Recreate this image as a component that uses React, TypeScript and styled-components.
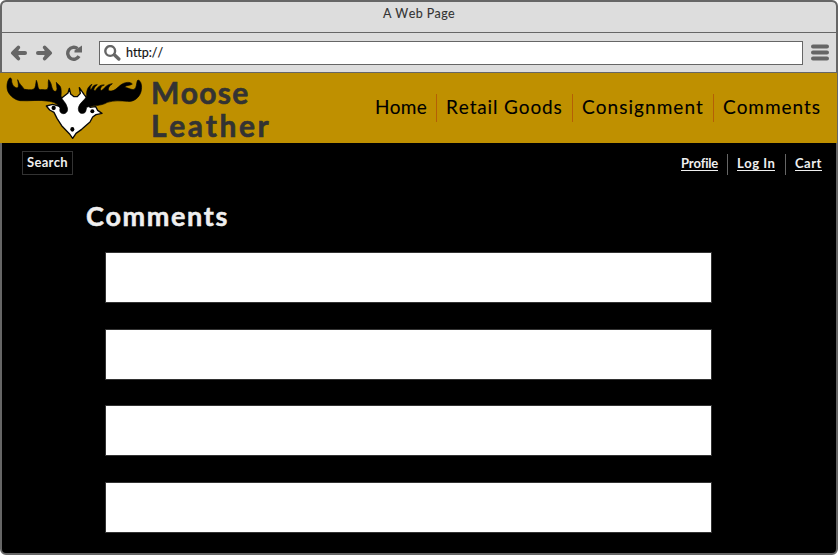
import React from "react";
import styled, { createGlobalStyle } from "styled-components";

const GlobalStyle = createGlobalStyle`
  * { box-sizing: border-box; }
  body { margin: 0; background: #fff; overflow: hidden; }
`;

const BrowserWindow = styled.div`
  width: 838px;
  height: 555px;
  display: flex;
  flex-direction: column;
  border: 2px solid #666;
  border-radius: 6px;
  background: #000;
  font-family: Lato, "Open Sans", sans-serif;
`;

const TitleBar = styled.div`
  height: 31px;
  flex: none;
  display: flex;
  justify-content: center;
  border-bottom: 1px solid #666;
  border-radius: 4px 4px 0 0;
  background: #ddd;
`;

const Toolbar = styled.div`
  height: 40px;
  flex: none;
  display: flex;
  align-items: center;
  padding: 0 7px 0 8px;
  border-bottom: 1px solid #666;
  background: #ddd;
  color: #666;
`;

const ToolIcon = styled.svg<{ $gap?: number }>`
  flex: none;
  display: block;
  margin-right: ${(p) => p.$gap ?? 0}px;
`;

const AddressBar = styled.div`
  width: 704px;
  height: 24px;
  margin-right: 8px;
  padding-left: 4px;
  display: flex;
  align-items: center;
  border: 1px solid #666;
  background: #fff;
`;

const Text = styled.span<{
  $size: number;
  $line: number;
  $spacing?: number;
  $color?: string;
  $weight?: number;
  $stroke?: number;
}>`
  display: block;
  white-space: nowrap;
  font-size: ${(p) => p.$size}px;
  line-height: ${(p) => p.$line}px;
  letter-spacing: ${(p) => p.$spacing ?? 0}px;
  color: ${(p) => p.$color ?? "#111"};
  font-weight: ${(p) => p.$weight ?? 400};
  -webkit-text-stroke: ${(p) => p.$stroke ?? 0}px currentColor;
  font-kerning: none;
`;

const Header = styled.header`
  height: 70px;
  flex: none;
  display: flex;
  margin: 0 -1px 0 -2px;
  background: #bf9000;
`;

const Logo = styled.svg`
  width: 150px;
  height: 70px;
  flex: none;
`;

const Brand = styled.div`
  width: 216px;
  padding: 3px 0 0 1px;
`;

const Nav = styled.nav`
  display: flex;
  height: 28px;
  margin-top: 21px;
`;

const NavItem = styled.a<{ $width: number }>`
  width: ${(p) => p.$width}px;
  padding-left: 9px;
  & + & { border-left: 1px solid #b45f06; }
`;

const Page = styled.main`
  flex: 1;
  min-height: 0;
`;

const UtilityRow = styled.div`
  height: 49px;
  padding: 8px 0 0 20px;
  display: flex;
  justify-content: space-between;
`;

const SearchButton = styled.button`
  width: 51px;
  height: 24px;
  padding: 0 0 1px 4px;
  border: 1px solid #333;
  background: #000;
  font-family: inherit;
  text-align: left;
`;

const AccountLinks = styled.div`
  display: flex;
  height: 21px;
  margin-top: 3px;
`;

const AccountLink = styled.a<{ $width: number }>`
  width: ${(p) => p.$width}px;
  padding-left: 9px;
  & + & { border-left: 1px solid #666; }
`;

const Underlined = styled.div`
  width: fit-content;
  height: 17px;
  border-bottom: 1px solid #efefef;
`;

const Heading = styled.h1`
  margin: 0;
  height: 60px;
  padding: 7px 0 0 84px;
`;

const CommentList = styled.div`
  padding-left: 103px;
`;

const CommentBox = styled.div<{ $gap: number }>`
  width: 607px;
  height: 51px;
  margin-bottom: ${(p) => p.$gap}px;
  border: 1px solid #333;
  background: #fff;
`;

const NAV = [
  { label: "Home", width: 70, spacing: 0.25 },
  { label: "Retail Goods", width: 136, spacing: 0.85 },
  { label: "Consignment", width: 141, spacing: 1.05 },
  { label: "Comments", width: 123, spacing: 0.95 },
];

const ACCOUNT = [
  { label: "Profile", width: 55, spacing: -0.2 },
  { label: "Log In", width: 58, spacing: 0.5 },
  { label: "Cart", width: 51, spacing: 0.5 },
];

const Arrow = ({ flip, gap }: { flip?: boolean; gap: number }) => (
  <ToolIcon $gap={gap} width="18" height="16" viewBox="0 0 18 16">
    <g transform={flip ? "translate(18 0) scale(-1 1)" : undefined} fill="none" stroke="#666" strokeLinecap="round">
      <path d="M4 8H15" strokeWidth="4" />
      <path d="M8.3 2.4L2.8 8L8.3 13.6" strokeWidth="3.6" strokeLinejoin="round" />
      <path d="M3 8L8.5 2.5V13.5Z" fill="#666" stroke="none" />
    </g>
  </ToolIcon>
);

const MooseLogo = () => (
  <Logo viewBox="0 9 450 210">
    <path
      d="M180 88L190 80L204 69L208 55L212 72L222 80L232 80L241 70L238 53L252 73L259 82L270 112L287 110L293 121L306 130L288 134L278 141L270 156L245 178L228 190L218 205L208 191L185 167L171 145L162 127L149 120L139 108L158 103L176 108Z"
      fill="#fff"
      stroke="#080808"
      strokeWidth="4"
      strokeLinejoin="round"
    />
    <path
      d="M29 24C20 34 19 53 24 65C31 79 46 90 60 92C88 94 116 88 148 94C167 97 176 106 180 115C177 126 184 132 192 131C202 129 205 120 201 110C198 97 186 91 183 78C184 65 184 57 181 50C177 43 171 42 169 37L171 56C170 65 164 66 160 61C153 51 157 43 146 29C143 38 147 48 143 57C137 62 128 58 121 59C112 58 115 44 109 31C107 42 107 53 102 57C92 62 79 58 73 58C66 47 58 43 53 29C54 39 58 50 52 54C42 53 34 42 35 29C34 25 32 23 29 24Z"
      fill="#000"
      stroke="#000"
      strokeWidth="2"
    />
    <path
      d="M414 30C410 32 411 43 407 53C401 65 388 54 374 52C378 44 389 48 397 42C390 34 374 37 365 43C352 52 344 65 329 63C321 59 326 49 337 41C320 43 314 54 306 61C298 63 300 49 313 45C300 43 291 54 286 62C277 63 283 50 292 44C282 44 278 48 275 57C270 61 268 54 276 43C262 50 259 64 260 79C253 92 237 99 235 116C235 126 241 132 250 130C258 129 258 120 260 112C275 106 303 109 322 97C341 91 362 92 382 94C402 97 419 81 423 65C427 50 424 32 414 30Z"
      fill="#000"
      stroke="#000"
      strokeWidth="2"
    />
    <circle cx="161" cy="114" r="6.5" fill="#000" />
    <ellipse cx="217" cy="178" rx="6" ry="7" fill="#000" />
    <circle cx="277" cy="124" r="6" fill="#000" />
  </Logo>
);

export default function App() {
  return (
    <>
      <GlobalStyle />
      <BrowserWindow>
        <TitleBar>
          <Text $size={12.5} $line={24} $spacing={0.4} $color="#333" $stroke={0.1}>A Web Page</Text>
        </TitleBar>
        <Toolbar>
          <Arrow gap={7} />
          <Arrow flip gap={12} />
          <ToolIcon $gap={16} width="18" height="16" viewBox="0 0 18 16">
            <path d="M14 11.2A6 6 0 1 1 12.5 3.6" fill="none" stroke="#666" strokeWidth="3.4" />
            <path d="M17 .5V7.5H9.5V5.5Z" fill="#666" />
          </ToolIcon>
          <AddressBar>
            <ToolIcon $gap={5} width="17" height="16" viewBox="0 0 17 16">
              <circle cx="6.2" cy="6" r="4.9" fill="none" stroke="#666" strokeWidth="2.4" />
              <path d="M10.3 9.8L14.8 14" stroke="#666" strokeWidth="3.4" strokeLinecap="round" />
            </ToolIcon>
            <Text $size={12.5} $line={24} $spacing={-0.05} $stroke={0.15}>http://</Text>
          </AddressBar>
          <ToolIcon width="18" height="17" viewBox="0 0 18 17">
            <path d="M2 2.5H16M2 8.5H16M2 14.5H16" stroke="#666" strokeWidth="4" strokeLinecap="round" />
          </ToolIcon>
        </Toolbar>
        <Header>
          <MooseLogo />
          <Brand>
            <Text $size={30} $line={33} $spacing={1.3} $color="#333" $weight={700} $stroke={0.6}>Moose</Text>
            <Text $size={30} $line={33} $spacing={2.6} $color="#333" $weight={700} $stroke={0.6}>Leather</Text>
          </Brand>
          <Nav>
            {NAV.map((n) => (
              <NavItem key={n.label} $width={n.width}>
                <Text $size={19} $line={26} $spacing={n.spacing} $color="#000" $stroke={0.1}>{n.label}</Text>
              </NavItem>
            ))}
          </Nav>
        </Header>
        <Page>
          <UtilityRow>
            <SearchButton>
              <Text $size={13} $line={21} $spacing={0.3} $color="#efefef" $weight={700}>Search</Text>
            </SearchButton>
            <AccountLinks>
              {ACCOUNT.map((a) => (
                <AccountLink key={a.label} $width={a.width}>
                  <Underlined>
                    <Text $size={13} $line={18} $spacing={a.spacing} $color="#efefef" $weight={700}>{a.label}</Text>
                  </Underlined>
                </AccountLink>
              ))}
            </AccountLinks>
          </UtilityRow>
          <Heading>
            <Text $size={27} $line={34} $spacing={1.6} $color="#efefef" $weight={700} $stroke={0.5}>Comments</Text>
          </Heading>
          <CommentList>
            <CommentBox $gap={26} />
            <CommentBox $gap={25} />
            <CommentBox $gap={26} />
            <CommentBox $gap={0} />
          </CommentList>
        </Page>
      </BrowserWindow>
    </>
  );
}
